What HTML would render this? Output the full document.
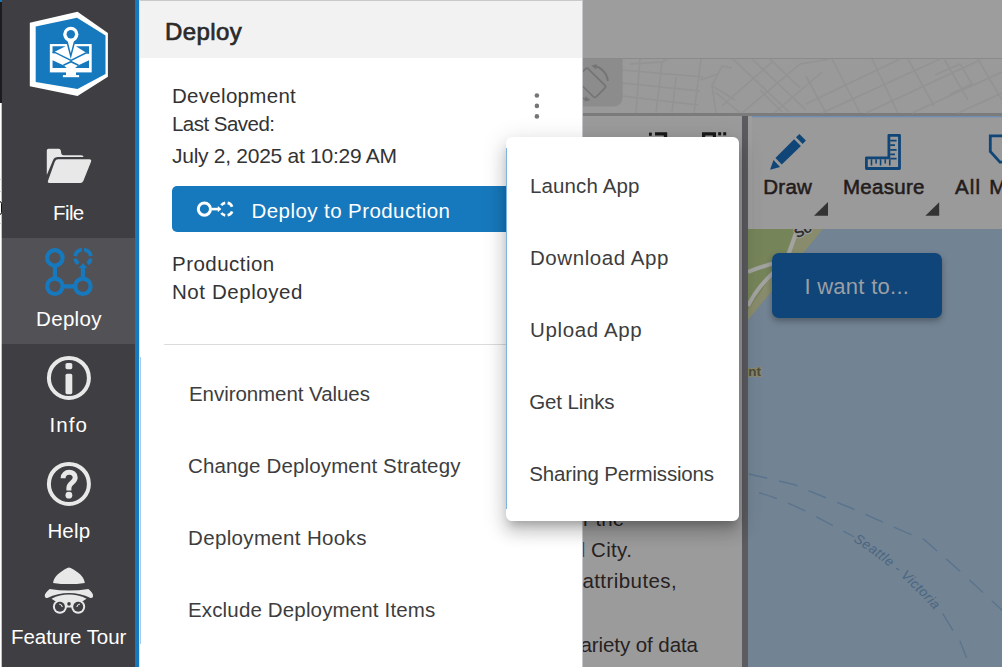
<!DOCTYPE html>
<html lang="en">
<head>
<meta charset="utf-8">
<title>Deploy</title>
<style>
html,body{margin:0;padding:0;}
body{width:1002px;height:667px;overflow:hidden;position:relative;background:#9b9b9b;font-family:"Liberation Sans",sans-serif;color:#2b2b2b;}
.abs{position:absolute;}
.t{position:absolute;white-space:nowrap;line-height:1;z-index:5;}
.bd{color:#27211f;z-index:1;}
.lk{color:#1c3c78;}
/* ---------- sidebar ---------- */
#edge{z-index:2;left:0;top:0;width:4px;height:667px;background:linear-gradient(90deg,#fff 0,#fff 1.1px,#3f3e42 2.4px);}
#edgeTop{z-index:2;left:0;top:0;width:4px;height:102.6px;background:linear-gradient(90deg,#1c1c1e 0,#1c1c1e 1.5px,#3f3e42 2.3px);}
#side{z-index:2;left:3px;top:0;width:132px;height:667px;background:#3f3e42;}
#sel{z-index:2;left:2px;top:238px;width:133px;height:106px;background:#525156;}
#edgeSel{z-index:2;left:0;top:238px;width:4px;height:106px;background:linear-gradient(90deg,#fff 0,#fff 1.1px,#525156 2.4px);}
.eln{z-index:2;left:0;width:1.5px;height:1px;background:#d0d0d0;}
#bluebar{z-index:2;left:135px;top:0;width:4px;height:667px;background:#1779bd;}
.sl{color:#fff;}
.hd{color:#2a2a2a;}
.bt{color:#fff;}
.tb{color:#231c1c;z-index:1;}
.wt{color:#9b9fa4;z-index:1;}
/* ---------- panel ---------- */
#panel{z-index:2;left:139px;top:0;width:443px;height:667px;background:#fff;}
#phead{z-index:2;left:139px;top:0;width:443px;height:58px;background:#f2f2f2;border-top:1px solid #c9c9c9;box-sizing:border-box;}
.pt{color:#333;}
#btn{z-index:2;left:172px;top:186px;width:380px;height:46px;background:#1779bd;border-radius:5px;}
#divider{z-index:2;left:164px;top:344px;width:418px;height:1px;background:#dcdcdc;}
/* ---------- popup ---------- */
#pop{z-index:4;left:506px;top:137px;width:233px;height:384px;background:#fff;border-radius:6px;
 box-shadow:0 7px 8px -4px rgba(0,0,0,.2),0 11px 16px 1px rgba(0,0,0,.14),0 5px 23px 3px rgba(0,0,0,.12);}
.mi{color:#3d3d3d;}
/* ---------- right side ---------- */
#rtop{left:582px;top:0;width:420px;height:58px;background:#9d9d9d;}
#rline{left:582px;top:58px;width:420px;height:1px;background:#8a8a8a;}
#rmap{left:582px;top:59px;width:420px;height:54px;background:#9a9a9a;overflow:hidden;}
#rbar{left:582px;top:113px;width:420px;height:3px;background:#7b7b7b;}
#vbar{left:742px;top:116px;width:6px;height:551px;background:#5b5b60;}
#tool{left:748px;top:116px;width:254px;height:113px;background:#9a9a9a;}
#want{z-index:1;left:772px;top:253px;width:170px;height:65px;background:#10457a;border-radius:7px;box-shadow:0 3px 6px rgba(0,0,0,.3);}
</style>
</head>
<body>
<!-- right side background -->
<div class="abs" id="rtop"></div>
<div class="abs" id="rline"></div>
<div class="abs" id="rmap"></div>
<div class="abs" id="rbar"></div>
<div class="abs" id="vbar"></div>
<div class="abs" id="tool"></div>


<!-- right side graphics -->
<svg class="abs" id="rightgfx" style="left:560px;top:0;z-index:1" width="442" height="667" viewBox="560 0 442 667">
 <!-- faint street map strip -->
 <g stroke="#939393" stroke-width="1.6" fill="none">
  <path d="M622,70 L703,77 M622,83 L700,91 M622,96 L698,105 M640,59 L636,113 M662,62 L656,113 M630,64 L662,62 L668,59 M701,59 L694,113 M676,77 L672,113 M700,80 L718,74 L722,66 L732,68 M712,86 L716,113 M718,74 L712,86 L735,100"/>
  <path d="M733,59 L790,113 M752,59 L806,110 M770,59 L800,88 M715,92 L740,113 M722,106 L772,62 M742,113 L800,64 M774,113 L822,72 M760,90 L782,112"/>
  <path d="M806,104 L900,59 M822,113 L940,59 M866,113 L978,61 M912,113 L1002,72 M958,113 L1002,93 M800,64 L830,59 M832,59 L860,113 M872,59 L898,113 M806,76 L826,113 M908,59 L934,106 M944,59 L968,100 M978,59 L1002,100 M935,75 L960,64 L972,84 L950,94"/>
 </g>
 <!-- rotate button -->
 <path d="M582,59 H622.6 V96.6 Q622.6,106.6 612.6,106.6 H582 Z" fill="#8c8c8c"/>
 <g fill="none" stroke="#747474" stroke-width="1.7">
  <rect x="-13.6" y="-8.1" width="27.2" height="16.2" rx="2" transform="translate(590.85,82.85) rotate(44.5)"/>
  <path d="M593.2,65.8 A17.2,17.2 0 0 1 607.9,80.9" stroke-width="2"/>
  <path d="M588.5,99.9 A17.2,17.2 0 0 1 573.8,84.8" stroke-width="2"/>
 </g>
 <polygon points="591.4,65.4 597.2,64.2 596,69.4" fill="#747474"/>
 <polygon points="590.3,100.3 584.5,101.5 585.7,96.3" fill="#747474"/>
 <!-- tiny black glyph fragments above popup -->
 <g fill="#1a1a1a">
  <rect x="649" y="132.6" width="2.8" height="3.2"/>
  <path d="M655,132.2 H667.2 V137.5 H663.8 V135.6 H655 Z"/>
  <path d="M702,132.2 H716 V137.5 H712.8 V135.6 H705.2 V137.5 H702 Z"/>
  <rect x="718.2" y="132.2" width="3" height="3.2"/>
  <rect x="723.2" y="132.2" width="3" height="3.2"/>
 </g>
 <!-- toolbar top accent line -->
 <rect x="752" y="116" width="250" height="1.3" fill="#6e8db0"/>
 <rect x="748" y="117" width="4" height="112" fill="#a1a1a1" opacity="0.6"/>
 <!-- Draw pencil -->
 <g fill="#0f4577">
  <polygon points="799.4,133.9 805.9,140.6 802.6,144 796,137.25"/>
  <polygon points="794.1,139.35 800.9,146.1 781.75,164.6 775.4,157.9"/>
  <polygon points="773.5,160.1 780.1,166.9 770.1,169.7"/>
 </g>
 <!-- Measure -->
 <g fill="none" stroke="#0f4577">
  <path d="M888.9,135.3 H899.5 V168.5 H866.4 V157.8 H888.9 Z" stroke-width="2.8" stroke-linejoin="round"/>
  <path d="M890.2,140.6 H896.6 M890.2,145.1 H895 M890.2,149.85 H896.6 M890.2,154.35 H895 M890.2,158.6 H896.6 M871.5,159.2 V165.4 M876.1,159.2 V163.4 M880.6,159.2 V165.4 M885.25,159.2 V163.4 M889.75,159.2 V165.4" stroke-width="1.6"/>
 </g>
 <!-- third icon (clipped) -->
 <path d="M1004,135.8 H990.3 V151.4 L1000,162.2 H1004" fill="none" stroke="#0f4577" stroke-width="2.8"/>
 <!-- dropdown triangles -->
 <polygon points="828,202 828,215.8 814,215.8" fill="#333"/>
 <polygon points="939.2,202.2 939.2,215.8 925.4,215.8" fill="#333"/>
 <!-- map -->
 <clipPath id="mapclip"><rect x="748" y="229" width="254" height="438"/></clipPath>
 <g id="mapg" clip-path="url(#mapclip)">
  <rect x="748" y="229" width="254" height="438" fill="#728393"/>
  <polygon points="748,229 823,229 748,320" fill="#888c6c"/>
  <polygon points="748,229 795,229 786,253 762,290 748,310" fill="#76845a"/>
  <path d="M797.5,229 L789,253 C782,268 760,280 748,306" stroke="#a2a2a0" stroke-width="4" fill="none"/>
  <path d="M748,272 C758,268 766,265 776,263" stroke="#a2a2a0" stroke-width="4" fill="none"/>
  <path d="M748.8,474 L793,484.2 L850.9,508 L908.8,533.6 L924,539.4 L959.8,571 L1004,612" stroke="#5a748e" stroke-width="1.4" fill="none" stroke-dasharray="19 12"/>
  <path d="M759,492.8 C775,497 790,504 806.7,511.5 L854.3,537" stroke="#5a748e" stroke-width="1.4" fill="none" stroke-dasharray="19 12"/>
  <path d="M942.8,613.6 L953,630.6 M959.8,640.8 L966.6,657.8" stroke="#5a748e" stroke-width="1.4" fill="none"/>
  <path id="ferry" d="M852,535.5 C 880,552 915,580 946,617" fill="none" stroke="none"/>
  <text font-family="Liberation Sans, sans-serif" font-size="13.5" font-style="italic" fill="#4a6682" dy="4.2"><textPath href="#ferry" startOffset="4" textLength="108">Seattle - Victoria</textPath></text>
  <text x="748.2" y="376.4" font-family="Liberation Sans, sans-serif" font-size="13.5" font-weight="bold" fill="#4e4c3a" stroke="#8a8868" stroke-width="2.2" paint-order="stroke" stroke-linejoin="round">nt</text>
  <text transform="translate(797.3,238.6) rotate(-27)" font-family="Liberation Sans, sans-serif" font-size="14" font-weight="bold" fill="#2e2e2e" stroke="#9b9b9b" stroke-width="2.4" paint-order="stroke" stroke-linejoin="round">So</text>
 </g>
</svg>

<div class="abs" id="want"></div>
<!-- sidebar -->
<div class="abs" id="edge"></div>
<div class="abs" id="edgeTop"></div>
<div class="abs" id="side"></div>
<div class="abs" id="sel"></div>
<div class="abs" id="edgeSel"></div>
<div class="abs eln" style="top:179px"></div><div class="abs eln" style="top:191px"></div><div class="abs eln" style="top:223px"></div>
<div class="abs" style="z-index:2;left:-3px;top:200.5px;width:3px;height:12px;border:1.6px solid #111;border-radius:2.5px;box-sizing:content-box"></div>
<div class="abs" id="bluebar"></div>


<!-- sidebar icons -->
<svg class="abs" id="sideicons" style="left:0;top:0;z-index:3" width="139" height="667" viewBox="0 0 139 667">
 <!-- logo -->
 <polygon points="29.8,22.8 77.5,11.8 107.9,33.1 107.9,76.7 77.5,96.1 29.8,86.3" fill="#fff"/>
 <polygon points="35.7,26.6 77,17.8 105.5,35.4 105.5,74 77.5,89.1 35.7,81.9" fill="#1779bd"/>
 <g id="logo-in">
  <rect x="49.85" y="44.05" width="41.85" height="28.35" fill="#fff"/>
  <rect x="66" y="72" width="10" height="3.6" fill="#fff"/>
  <rect x="62.9" y="75.1" width="16.2" height="2.1" fill="#fff"/>
  <polygon points="52.55,46.3 65.6,46.3 55.7,51.25 52.55,53.2" fill="#1779bd"/>
  <polygon points="75.95,46.3 89,46.3 89,53.6 85.4,52.15" fill="#1779bd"/>
  <polygon points="52.55,60.25 63.4,65.2 66.8,67.9 52.55,67.9" fill="#1779bd"/>
  <polygon points="89,60.25 78.4,65.2 75,67.9 89,67.9" fill="#1779bd"/>
  <path d="M52.55,52.6 L55.4,52.7 L71,60.3 L85.8,53.1 L89,52.9 M63.4,65.3 L71,61.7 L78.5,65.3" stroke="#1779bd" stroke-width="1.5" fill="none"/>
  <polygon points="66.6,40 75,40 70.75,56" fill="#fff" stroke="#1779bd" stroke-width="1.5"/>
  <circle cx="70.8" cy="34.3" r="7.6" fill="#fff"/>
  <circle cx="70.8" cy="34.3" r="4.2" fill="#1779bd"/>
 </g>
 <!-- File -->
 <g fill="#e8e8e8">
  <path d="M46.8,150.6 Q46.8,148.8 48.6,148.8 L58.8,148.8 Q60.5,148.8 60.8,150.4 L61.3,153.6 Q61.6,155.3 63.5,155.3 L81.3,155.3 Q83.3,155.3 83.6,157.1 L58,157.1 Q54.3,157.1 53,160.3 L46.8,175 Z"/>
  <path d="M58.3,159.3 L89.2,159.3 Q91.9,159.3 91,161.7 L83.3,181.1 Q82.5,183 80.3,183 L49.6,183 Q47.2,183 48,180.8 L54.8,161.7 Q55.7,159.3 58.3,159.3 Z"/>
 </g>
 <!-- Deploy -->
 <g fill="none" stroke="#1779bd" stroke-width="4.2">
  <circle cx="54.9" cy="257.9" r="7.7"/>
  <circle cx="54.9" cy="286.3" r="7.7"/>
  <circle cx="82.9" cy="286.3" r="7.7"/>
  <path d="M84.10,249.58 A7.9,7.9 0 0 1 90.80,256.16 M75.20,256.16 A7.9,7.9 0 0 1 81.90,249.58 M78.36,263.79 A7.9,7.9 0 0 1 75.20,258.64 M90.80,258.64 A7.9,7.9 0 0 1 87.64,263.79" stroke-width="3.8"/>
  <path d="M54.9,265.6 V278.6 M62.6,286.3 H75.2 M82.9,278.6 V267"/>
 </g>
 <polygon points="83,263.2 87.4,268 78.6,268" fill="#1779bd"/>
 <!-- Info -->
 <circle cx="68.9" cy="377.9" r="20" fill="none" stroke="#e8e8e8" stroke-width="4"/>
 <rect x="65.5" y="363" width="6.8" height="6.2" rx="1.6" fill="#e8e8e8"/>
 <rect x="65.5" y="373.8" width="6.8" height="20.4" rx="1.6" fill="#e8e8e8"/>
 <!-- Help -->
 <circle cx="68.9" cy="483.9" r="20" fill="none" stroke="#e8e8e8" stroke-width="4"/>
 <path d="M63.1,478.2 C63.1,470.4 75.2,470.4 75.2,477.6 C75.2,482.6 68.9,482.8 68.9,488 L68.9,490.6" fill="none" stroke="#e8e8e8" stroke-width="5"/>
 <circle cx="68.9" cy="495.2" r="3.4" fill="#e8e8e8"/>
 <!-- Feature tour -->
 <g fill="#e8e8e8">
  <path d="M53.1,582.9 C54,577.4 58,573.6 63,570.6 C65,569.4 66.6,568 69,567.6 C71.4,568 73,569.4 75,570.6 C80,573.6 84,577.4 84.8,582.9 Q69,585.3 53.1,582.9 Z"/>
  <path d="M49.7,589 Q69,592 88.4,589 C91,591 93.3,594 93.1,596 Q92.8,598.6 90.5,598 C84,594.5 76,593 69,593 C62,593 54,594.5 47.4,598 Q45,598.6 44.7,596 C44.6,594 47,591 49.7,589 Z"/>
  <path d="M51.5,598.7 C57,596 63,594.6 69,594.6 C75,594.6 81,596 86.6,598.7 L83,601 L55,601 Z"/>
  <circle cx="59.9" cy="606.7" r="7"/>
  <circle cx="78.2" cy="606.7" r="7"/>
  <rect x="62" y="600.5" width="14" height="7"/>
 </g>
 <circle cx="59.9" cy="606.7" r="5" fill="#3f3e42"/>
 <circle cx="78.2" cy="606.7" r="5" fill="#3f3e42"/>
 <circle cx="69" cy="603.9" r="1.8" fill="#3f3e42"/>
 <path d="M59.2,604 Q61.8,604.5 62.3,607 M76.8,607 Q77.3,604.5 79.9,604" stroke="#e8e8e8" stroke-width="1.2" fill="none"/>
</svg>

<!-- panel -->
<div class="abs" id="panel"></div>
<div class="abs" id="phead"></div>
<div class="abs" id="btn"></div>
<div class="abs" id="divider"></div>
<div class="abs" style="z-index:2;left:582px;top:0;width:1px;height:667px;background:#c8c8cc"></div>
<div class="abs" style="z-index:2;left:139px;top:0;width:1px;height:667px;background:#e4e0e2"></div>

<!--EXTRA-->
<div class="t bd lk" style="left:582.2px;top:540px;font-size:20.5px;transform:scaleX(.6);transform-origin:0 0">l</div>
<svg class="abs" style="left:520px;top:85px;z-index:3" width="34" height="40" viewBox="520 85 34 40">
 <circle cx="536.9" cy="95.5" r="2.3" fill="#757575"/><circle cx="536.9" cy="105.9" r="2.3" fill="#757575"/><circle cx="536.9" cy="116.4" r="2.3" fill="#757575"/>
</svg>
<div class="abs" style="left:506px;top:148px;width:1px;height:361px;background:#7db3e0;z-index:5"></div>
<svg class="abs" style="left:190px;top:196px;z-index:3" width="50" height="26" viewBox="190 196 50 26">
 <g fill="none" stroke="#fff">
  <circle cx="204.4" cy="209.1" r="6.1" stroke-width="3"/>
  <path d="M211.5,209.1 H218.5" stroke-width="2.6"/>
  <path d="M227.61,202.94 A6.3,6.3 0 0 1 232.14,206.74 M232.14,211.46 A6.3,6.3 0 0 1 227.61,215.26 M225.21,215.30 A6.3,6.3 0 0 1 221.34,212.98 M221.34,205.22 A6.3,6.3 0 0 1 225.21,202.90" stroke-width="2.7"/>
 </g>
 <polygon points="217.8,205.9 221.4,209.1 217.8,212.3" fill="#fff"/>
</svg>
<div class="abs" style="left:140px;top:357px;width:1px;height:287px;background:#a6cbe8;z-index:3"></div>
<div class="abs" style="left:0;top:0;width:2px;height:2px;background:#1779bd;z-index:6"></div>
<!--/EXTRA-->
<!-- popup -->
<div class="abs" id="pop"></div>
<!--TEXT-->
<div class="t hd" style="left:165px;top:20.4px;font-size:24px;letter-spacing:0.4px;-webkit-text-stroke:0.7px">Deploy</div>
<div class="t pt" style="left:172px;top:85.8px;font-size:20.5px;letter-spacing:0.3px">Development</div>
<div class="t pt" style="left:172px;top:114.0px;font-size:20.5px;letter-spacing:-0.53px">Last Saved:</div>
<div class="t pt" style="left:172px;top:145.4px;font-size:21px;letter-spacing:-0.27px">July 2, 2025 at 10:29 AM</div>
<div class="t bt" style="left:251.5px;top:200.8px;font-size:20.5px;letter-spacing:0.43px">Deploy to Production</div>
<div class="t pt" style="left:172px;top:253.8px;font-size:20.5px;letter-spacing:0.47px">Production</div>
<div class="t pt" style="left:172px;top:282.0px;font-size:20.5px;letter-spacing:0.57px">Not Deployed</div>
<div class="t mi" style="left:189px;top:384.3px;font-size:20.5px;letter-spacing:-0.06px">Environment Values</div>
<div class="t mi" style="left:188px;top:456.3px;font-size:20.5px;letter-spacing:0.14px">Change Deployment Strategy</div>
<div class="t mi" style="left:188px;top:528.3px;font-size:20.5px;letter-spacing:0.35px">Deployment Hooks</div>
<div class="t mi" style="left:188px;top:600.3px;font-size:20.5px;letter-spacing:0.15px">Exclude Deployment Items</div>
<div class="t mi" style="left:530px;top:176.2px;font-size:20.5px;letter-spacing:0.13px">Launch App</div>
<div class="t mi" style="left:530px;top:248.0px;font-size:20.5px;letter-spacing:0.56px">Download App</div>
<div class="t mi" style="left:530px;top:320.1px;font-size:20.5px;letter-spacing:0.64px">Upload App</div>
<div class="t mi" style="left:529.3px;top:391.9px;font-size:20.5px;letter-spacing:-0.16px">Get Links</div>
<div class="t mi" style="left:529.3px;top:463.9px;font-size:20.5px;letter-spacing:-0.18px">Sharing Permissions</div>
<div class="t sl" style="left:53px;top:203.3px;font-size:20.5px;letter-spacing:-0.6px">File</div>
<div class="t sl" style="left:36.1px;top:309.3px;font-size:20.5px;letter-spacing:0.3px">Deploy</div>
<div class="t sl" style="left:49.4px;top:415.3px;font-size:20.5px;letter-spacing:1.07px">Info</div>
<div class="t sl" style="left:47.4px;top:521.3px;font-size:20.5px;letter-spacing:0.17px">Help</div>
<div class="t sl" style="left:11px;top:627.3px;font-size:20.5px;letter-spacing:-0.04px">Feature Tour</div>
<div class="t tb" style="left:763.3px;top:177.0px;font-size:20.5px;letter-spacing:0.23px;-webkit-text-stroke:0.55px">Draw</div>
<div class="t tb" style="left:843px;top:177.0px;font-size:20.5px;letter-spacing:0.28px;-webkit-text-stroke:0.55px">Measure</div>
<div class="t wt" style="left:804.4px;top:275.5px;font-size:22px;letter-spacing:0.28px">I want to...</div>
<div class="t tb" style="left:954.9px;top:176.8px;font-size:20.5px;letter-spacing:1.2px;-webkit-text-stroke:0.55px;word-spacing:1.1px">All M</div>
<div class="t bd" style="left:583px;top:509.3px;font-size:20.5px;letter-spacing:0.03px">r the</div>
<div class="t bd" style="left:582.4px;top:571.3px;font-size:20.5px;letter-spacing:0.43px">attributes,</div>
<div class="t bd" style="left:580.5px;top:634.6px;font-size:20.5px;letter-spacing:-0.08px">ariety of data</div>
<div class="t bd" style="left:591px;top:540.0px;font-size:20.5px;letter-spacing:0.35px">City.</div>
<!--/TEXT-->
</body>
</html>
